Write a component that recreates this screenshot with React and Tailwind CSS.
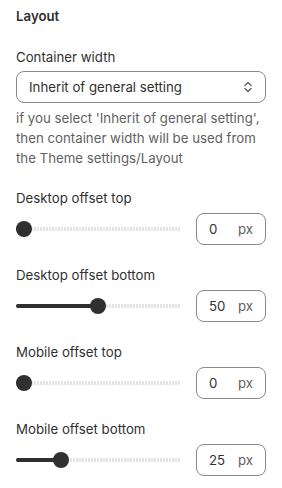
const SLIDERS = [
  { label: 'Desktop offset top', value: 0 },
  { label: 'Desktop offset bottom', value: 50 },
  { label: 'Mobile offset top', value: 0 },
  { label: 'Mobile offset bottom', value: 25 },
]

function RangeRow({ value }) {
  // knob travel: centers from 8px to width-8px
  const pct = value / 100
  return (
    <div className="flex items-center gap-4 h-8">
      <div className="relative flex-1 h-4">
        <div className="absolute left-0 right-0 top-1/2 -translate-y-1/2 h-1 bg-[repeating-linear-gradient(90deg,#e3e3e3_0_2px,transparent_2px_3px)]" />
        <div
          className="absolute left-0 top-1/2 -translate-y-1/2 h-1 rounded-full bg-[#303030]"
          style={{ width: `calc(8px + (100% - 16px) * ${pct})` }}
        />
        <div
          className="absolute top-0 w-4 h-4 rounded-full bg-[#303030]"
          style={{ left: `calc((100% - 16px) * ${pct})` }}
        />
      </div>
      <div className="w-[70px] h-8 shrink-0 flex items-center justify-between pl-3 pr-3 border border-[#8a8a8a] rounded-lg">
        <span className="text-[#303030]">{value}</span>
        <span className="text-[#616161]">px</span>
      </div>
    </div>
  )
}

export default function App() {
  return (
    <div className="w-[282px] h-[488px] bg-white px-4 pt-[6px] text-[13.25px] leading-5 text-[#303030] font-['Inter',sans-serif]">
      <h2 className="font-semibold">Layout</h2>

      <div className="mt-[21px]">
        <div>Container width</div>
        <div className="mt-1 h-8 flex items-center justify-between pl-3 pr-3 border border-[#8a8a8a] rounded-lg">
          <span>Inherit of general setting</span>
          <svg width="10" height="14" viewBox="0 0 10 14" fill="none" stroke="#616161" strokeWidth="1.4" strokeLinecap="round" strokeLinejoin="round">
            <path d="M2 5.5 L5 2.5 L8 5.5" />
            <path d="M2 8.5 L5 11.5 L8 8.5" />
          </svg>
        </div>
        <p className="mt-[5px] text-[#616161]">
          if you select 'Inherit of general setting', then container width will be used from the Theme settings/Layout
        </p>
      </div>

      <div className="mt-5 flex flex-col gap-5">
        {SLIDERS.map(s => (
          <div key={s.label}>
            <div>{s.label}</div>
            <div className="mt-[5px]">
              <RangeRow value={s.value} />
            </div>
          </div>
        ))}
      </div>
    </div>
  )
}
